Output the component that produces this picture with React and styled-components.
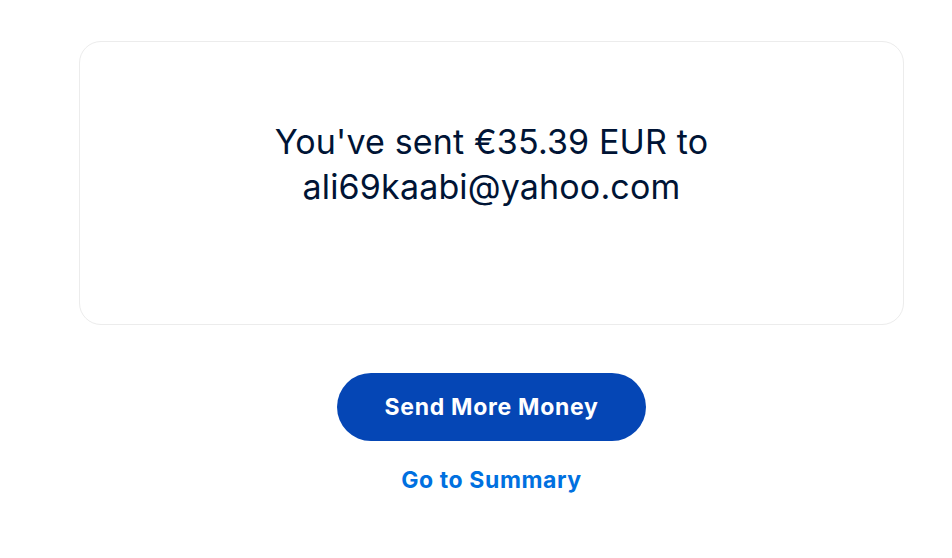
import React from 'react'
import styled, { createGlobalStyle } from 'styled-components'

const GlobalStyle = createGlobalStyle`
  body {
    margin: 0;
    background: #ffffff;
    font-family: Inter, "Liberation Sans", Arial, sans-serif;
  }
`

function App() {
  return (
    <Page>
      <GlobalStyle />
      <Card>
        <Message>You've sent €35.39 EUR to ali69kaabi@yahoo.com</Message>
      </Card>
      <Actions>
        <PrimaryButton>Send More Money</PrimaryButton>
        <TextLink href="#">Go to Summary</TextLink>
      </Actions>
    </Page>
  )
}

export default App

const Page = styled.div`
  padding: 41px 48px 0 79px;
  display: flex;
  flex-direction: column;
  align-items: center;
`

const Card = styled.section`
  box-sizing: border-box;
  width: 825px;
  height: 284px;
  border: 1px solid #ececec;
  border-radius: 22px;
  padding: 77px 170px 0;
  display: flex;
  justify-content: center;
`

const Message = styled.h1`
  margin: 0;
  font-size: 34px;
  font-weight: 400;
  line-height: 45px;
  color: #001435;
  text-align: center;
  letter-spacing: 0.15px;
`

const Actions = styled.div`
  margin-top: 48px;
  display: flex;
  flex-direction: column;
  align-items: center;
  gap: 25px;
`

const PrimaryButton = styled.button`
  width: 309px;
  height: 68px;
  border: none;
  border-radius: 34px;
  background: #0546b5;
  color: #ffffff;
  font-family: inherit;
  font-size: 23px;
  font-weight: 700;
  letter-spacing: 0.7px;
  cursor: pointer;
`

const TextLink = styled.a`
  color: #0070e0;
  font-size: 23px;
  font-weight: 700;
  letter-spacing: 0.6px;
  text-decoration: none;
`
